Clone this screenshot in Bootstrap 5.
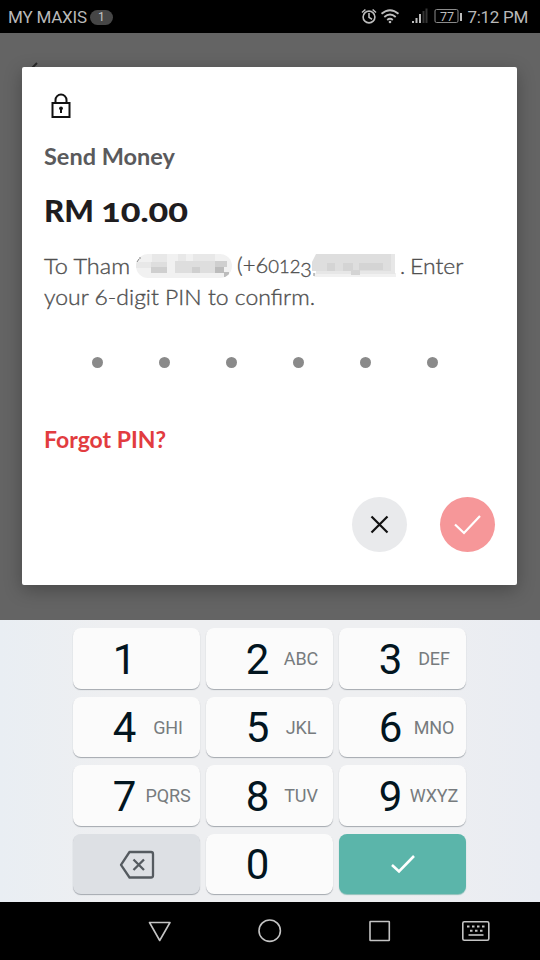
<!DOCTYPE html>
<html lang="en">
<head>
<meta charset="utf-8">
<meta name="viewport" content="width=device-width, initial-scale=1">
<title>Send Money</title>
<link href="https://cdn.jsdelivr.net/npm/bootstrap@5.3.0/dist/css/bootstrap.min.css" rel="stylesheet">
<style>
  body { font-family: Roboto, "Liberation Sans", sans-serif; width: 540px; height: 960px; background: #000; }
  svg { display: block; flex: none; }
  .statusbar { height: 33px; color: #b9b9b9; font-size: 17px; line-height: 33px; padding: 1px 12px 0 8px; }
  .statusbar .carrier { letter-spacing: -.2px; }
  .notice { width: 23px; height: 15px; margin-left: 3px; background: #464646; color: #c4c4c4; font-size: 12px; line-height: 15px; }
  .clock { margin-left: 5px; letter-spacing: -.3px; }
  .scrim { height: 587px; background: #646464; padding: 34px 23px 0 22px; position: relative; }
  .back-tip { position: absolute; left: 30px; top: 29px; }
  .dialog-card { height: 518px; border-radius: 2px; padding: 26px 22px 0; box-shadow: 0 5px 18px rgba(0,0,0,.28); position: relative; font-family: Lato, "Open Sans", sans-serif; }
  .wide { display: inline-block; transform-origin: left center; transform: scaleX(1.068); }
  .title-line { font-size: 22px; line-height: 30px; font-weight: 700; color: #5a5a5c; margin-top: 23px; }
  .amount { font-size: 30px; line-height: 40px; font-weight: 900; color: #1f1d1f; margin-top: 18px; white-space: nowrap; }
  .rm { width: 57px; }
  .rm .wide { transform: scaleX(1.04); }
  .oldstyle { font-size: 26px; display: inline-block; transform-origin: left center; transform: scaleX(1.31); }
  .message { color: #505050; font-weight: 300; font-size: 22px; line-height: 31px; margin-top: 18px; -webkit-text-stroke: .35px #505050; }
  .message > div { height: 31px; white-space: nowrap; }
  .message .second { transform: scaleX(1.044); }
  .low { font-size: .84em; }
  .drop { font-size: .9em; position: relative; top: 4px; }
  .w-name { width: 91px; } .w-phone { width: 74px; } .w-stop { width: 10px; }
  .pins { margin: 45px 0 0 48px; gap: 56.1px; }
  .pin { width: 11px; height: 11px; background: #8a8a8a; }
  .forgot { color: #e23c3f; font-size: 22px; line-height: 30px; font-weight: 700; margin-top: 57px; }
  .forgot .wide { transform: scaleX(1.045); }
  .round { width: 55px; height: 55px; }
  .actions { gap: 33px; margin-top: 42px; }
  .cancel { background: #e9eaec; } .accept { background: #f69799; }
  .keyboard { height: 282px; background: linear-gradient(90deg,#e9eef3 0,#eeeff1 20%,#eeeff1 75%,#e9ecf2 100%); padding: 8px 74px 0 73px; }
  .keys { display: grid; grid-template-columns: repeat(3,127px); grid-auto-rows: 60.5px; gap: 8px 6px; }
  .key { background: #fbfbfb; border-radius: 8px; box-shadow: 0 1px 1px #a3a8ae; padding-left: 31.500px; color: #02151f; }
  .digit { width: 40px; text-align: center; font-size: 42px; line-height: 61px; padding-top: 2px; }
  .letters { width: 47px; display: flex; justify-content: center; font-size: 18px; color: #777b7e; letter-spacing: -.1px; padding-top: 1px; }
  .key.erase { background: #dde0e4; padding: 3px 0 0; }
  .key.done { background: #5bb5aa; padding: 0; box-shadow: 0 1px 1px #8fc0ba; }
  .navkeys { height: 58px; padding-left: 148px; }
</style>
</head>
<body class="m-0 overflow-hidden">
<header class="statusbar d-flex align-items-center">
  <span class="carrier">MY MAXIS</span>
  <span class="notice rounded-pill text-center">1</span>
  <svg class="ms-auto" width="99" height="20" viewBox="361 7 99 20" fill="none" stroke="#bdbdbd" stroke-width="1.6">
    <circle cx="369" cy="17" r="5.9"/><path d="M369 13v4.4l3 1.8M362 12.5l3.4-3M376 12.5l-3.4-3"/>
    <path d="M381.5 13.8q8.500-7.200 17 0M384.300 17q5.700-4.900 11.400 0M387.200 20q2.800-2.400 5.600 0" stroke-width="1.8"/><circle cx="390" cy="22" r="1.300" fill="#bdbdbd" stroke="none"/>
    <path d="M413 23v-2M416.500 23v-5M420 23v-9" stroke-width="2"/><path d="M423.500 23v-12M426.500 23v-14.500" stroke="#353535" stroke-width="2"/>
    <rect x="435" y="9.500" width="23" height="13" rx="1.500" stroke="#8b8b8b" stroke-width="1"/>
    <text x="440" y="20.500" font-size="12.500" font-family="Roboto, sans-serif" fill="#bdbdbd" stroke="none">77</text>
  </svg>
  <svg width="3" height="20"><path d="M1 6v8" stroke="#bdbdbd" stroke-width="2"/></svg>
  <span class="clock">7:12 PM</span>
</header>

<main class="scrim">
  <svg class="back-tip" width="10" height="8"><path d="M7 1L2 6" stroke="#292929" stroke-width="2"/></svg>
  <section class="dialog-card bg-white">
    <svg width="36" height="26" viewBox="0 0 36 26" fill="none" stroke="#111" stroke-width="2">
      <rect x="8.500" y="10" width="17" height="14"/><path d="M11.500 10V7a5.500 5.500 0 0 1 11 0v3"/><circle cx="17" cy="15.300" r="1.900" fill="#111" stroke="none"/><path d="M17 15v5"/>
    </svg>
    <div class="title-line"><span class="wide">Send Money</span></div>
    <div class="amount d-flex align-items-baseline"><span class="rm"><span class="wide">RM</span></span><span class="oldstyle">10.00</span></div>
    <div class="message">
      <div class="d-flex align-items-center">
        <span class="w-name"><span class="wide">To Tham</span></span>
        <svg width="98" height="26" viewBox="0 0 98 26"><defs><clipPath id="n"><rect x="1" y="1" width="96" height="24" rx="12"/></clipPath></defs>
          <g clip-path="url(#n)"><path fill="#f1f1f1" d="M0 0h98v26H0z"/><path fill="#e8e8e8" d="M17 1h15v8H17zM43 1h8v12h-8zM0 9h16v6H0zM58 1h22v7H58z"/><path fill="#dedede" d="M16 9h16v6H16zM40 8h40v12H40z"/><path fill="#cfcfcf" d="M16 14h16v6H16zM57 14h8v6h-8zM80 8h12v6H80z"/><path fill="#bcbcbc" d="M80 14h9v6h-9zM89 19h5v5h-5z"/></g>
          <path d="M4 5h2M2 9l2-3" stroke="#888"/></svg>
        <span class="w-phone ms-1">(+6<span class="low">012</span><span class="drop">3</span></span>
        <svg width="85" height="26" viewBox="0 0 85 26"><path fill="#f1f1f1" d="M3 20h82v4H3z"/><path fill="#dedede" d="M5 1h75v17H1V9z"/><path fill="#e7e7e7" d="M80 1h4v20h-4zM5 18h75v3H5z"/><path fill="#d4d4d4" d="M16 10h8v8h-8zM32 10h10v8H32zM48 10h24v7H48zM40 17h9v5h-9z"/><path d="M3 20v3" stroke="#888"/></svg>
        <span class="w-stop ms-1">.</span><span class="wide second">Enter</span>
      </div>
      <div><span class="wide second">your 6-digit PIN to confirm.</span></div>
    </div>
    <div class="pins d-flex"><span class="pin rounded-circle"></span><span class="pin rounded-circle"></span><span class="pin rounded-circle"></span><span class="pin rounded-circle"></span><span class="pin rounded-circle"></span><span class="pin rounded-circle"></span></div>
    <div class="forgot"><span class="wide">Forgot PIN?</span></div>
    <div class="actions d-flex justify-content-end">
      <button class="round cancel border-0 rounded-circle p-0" aria-label="Cancel"><svg width="55" height="55" fill="none" stroke="#111" stroke-width="2.200"><path d="M19.500 19.500l16 16M35.500 19.500l-16 16"/></svg></button>
      <button class="round accept border-0 rounded-circle p-0" aria-label="Confirm"><svg width="55" height="55" fill="none" stroke="#fff" stroke-width="2.200"><path d="M15 27.500l9 8.500L40 19"/></svg></button>
    </div>
  </section>
</main>

<section class="keyboard">
  <div class="keys">
    <div class="key d-flex align-items-center"><span class="digit">1</span></div>
    <div class="key d-flex align-items-center"><span class="digit">2</span><span class="letters">ABC</span></div>
    <div class="key d-flex align-items-center"><span class="digit">3</span><span class="letters">DEF</span></div>
    <div class="key d-flex align-items-center"><span class="digit">4</span><span class="letters">GHI</span></div>
    <div class="key d-flex align-items-center"><span class="digit">5</span><span class="letters">JKL</span></div>
    <div class="key d-flex align-items-center"><span class="digit">6</span><span class="letters">MNO</span></div>
    <div class="key d-flex align-items-center"><span class="digit">7</span><span class="letters">PQRS</span></div>
    <div class="key d-flex align-items-center"><span class="digit">8</span><span class="letters">TUV</span></div>
    <div class="key d-flex align-items-center"><span class="digit">9</span><span class="letters">WXYZ</span></div>
    <div class="key erase d-flex align-items-center justify-content-center"><svg width="36" height="30" fill="none" stroke="#555b60" stroke-width="2.300" stroke-linejoin="round"><path d="M10.500 2H32q2 0 2 2v21.500q0 2-2 2H10.500L2 14.800zM14.500 9.500l10.500 10.500M25 9.500L14.500 20"/></svg></div>
    <div class="key d-flex align-items-center"><span class="digit">0</span></div>
    <div class="key done d-flex align-items-center justify-content-center"><svg width="26" height="20" fill="none" stroke="#fff" stroke-width="2.600"><path d="M2 11l7 6.500L24 2"/></svg></div>
  </div>
</section>

<nav class="navkeys">
  <svg width="345" height="58" viewBox="148 902 345 58" fill="none" stroke="#c4c4c4" stroke-width="1.600" stroke-linejoin="round">
    <path d="M149.500 922.500h20.500l-10.300 18z"/><circle cx="269.700" cy="930.700" r="10.700"/><rect x="370" y="921.500" width="19.300" height="19" rx=".5"/>
    <rect x="462.800" y="921.800" width="26" height="18.500" rx="1.500"/>
    <path d="M467 926.500h17.500" stroke-width="2" stroke-dasharray="2.500 2.500"/><path d="M470 930.800h13" stroke-width="2" stroke-dasharray="2.500 2.500"/><path d="M468.500 935h15"/>
  </svg>
</nav>
<script src="https://cdn.jsdelivr.net/npm/bootstrap@5.3.0/dist/js/bootstrap.bundle.min.js"></script>
</body>
</html>
